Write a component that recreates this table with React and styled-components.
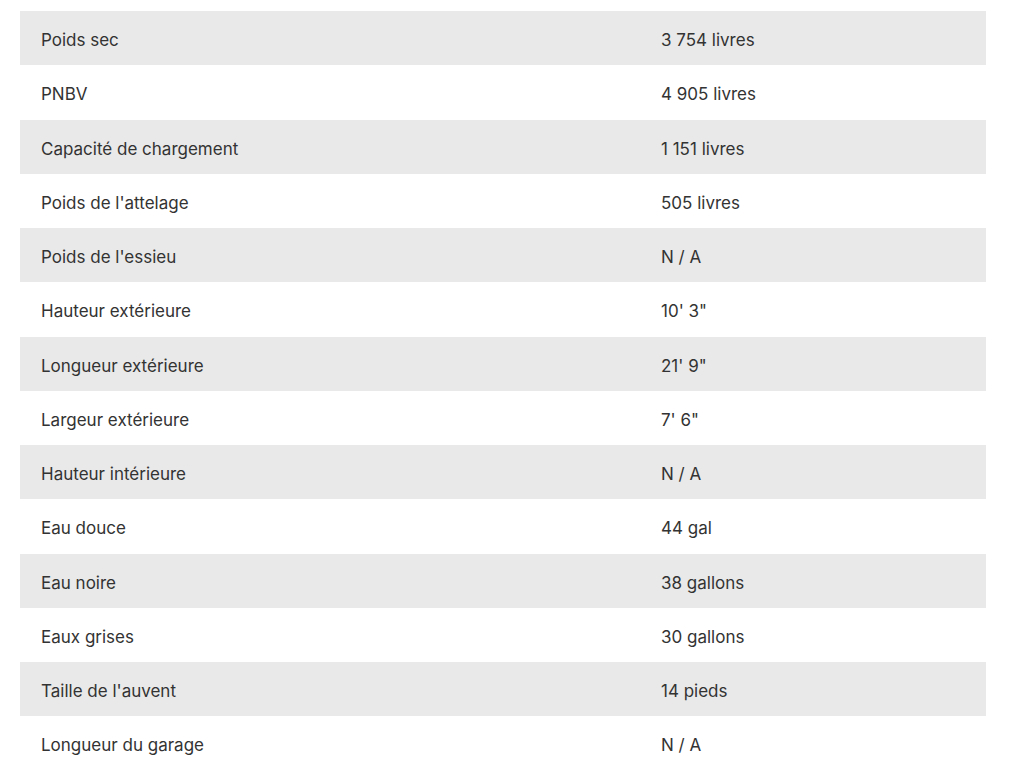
import React from "react";
import styled, { createGlobalStyle } from "styled-components";

const Global = createGlobalStyle`
  html, body { margin: 0; padding: 0; background: #fff; }
  body { font-family: Inter, "Noto Sans", sans-serif; }
`;

const Page = styled.div`
  padding: 11px 38px 0 20px;
`;

const Table = styled.div`
  display: flex;
  flex-direction: column;
  width: 966px;
`;

const Row = styled.div`
  display: grid;
  grid-template-columns: 620px 1fr;
  align-items: center;
  height: 54.25px;
  padding-left: 21px;
  padding-top: 4px;
  box-sizing: border-box;
  background: ${(p) => (p.$shaded ? "#e9e9e9" : "#ffffff")};
  color: #333333;
  font-size: 17px;
  line-height: 20px;
`;

const Cell = styled.div`
  white-space: nowrap;
`;

const rows = [
  ["Poids sec", "3 754 livres"],
  ["PNBV", "4 905 livres"],
  ["Capacité de chargement", "1 151 livres"],
  ["Poids de l'attelage", "505 livres"],
  ["Poids de l'essieu", "N / A"],
  ["Hauteur extérieure", "10' 3\""],
  ["Longueur extérieure", "21' 9\""],
  ["Largeur extérieure", "7' 6\""],
  ["Hauteur intérieure", "N / A"],
  ["Eau douce", "44 gal"],
  ["Eau noire", "38 gallons"],
  ["Eaux grises", "30 gallons"],
  ["Taille de l'auvent", "14 pieds"],
  ["Longueur du garage", "N / A"],
];

export default function App() {
  return (
    <>
      <Global />
      <Page>
        <Table>
          {rows.map(([k, v], i) => (
            <Row key={k} $shaded={i % 2 === 0}>
              <Cell>{k}</Cell>
              <Cell>{v}</Cell>
            </Row>
          ))}
        </Table>
      </Page>
    </>
  );
}
